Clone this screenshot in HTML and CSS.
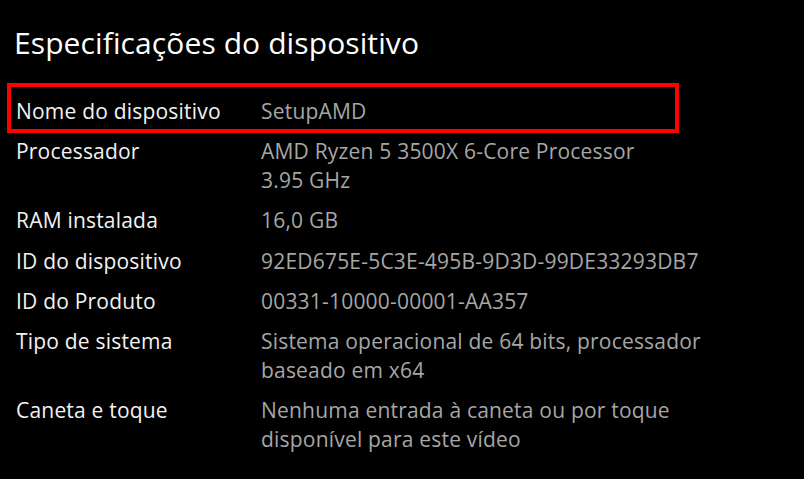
FILE: index.html
```html
<!DOCTYPE html>
<html lang="pt-BR">
<head>
<meta charset="utf-8">
<title>Especificações do dispositivo</title>
<link rel="stylesheet" href="styles.css">
</head>
<body>
<main class="panel">
  <h1 class="title">Especificações do dispositivo</h1>
  <dl class="specs">
    <div class="row highlighted">
      <dt class="label">Nome do dispositivo</dt>
      <dd class="value">SetupAMD</dd>
    </div>
    <div class="row">
      <dt class="label">Processador</dt>
      <dd class="value">AMD Ryzen 5 3500X 6-Core Processor<br>3.95 GHz</dd>
    </div>
    <div class="row">
      <dt class="label">RAM instalada</dt>
      <dd class="value">16,0 GB</dd>
    </div>
    <div class="row">
      <dt class="label">ID do dispositivo</dt>
      <dd class="value">92ED675E-5C3E-495B-9D3D-99DE33293DB7</dd>
    </div>
    <div class="row">
      <dt class="label">ID do Produto</dt>
      <dd class="value">00331-10000-00001-AA357</dd>
    </div>
    <div class="row">
      <dt class="label">Tipo de sistema</dt>
      <dd class="value">Sistema operacional de 64 bits, processador<br>baseado em x64</dd>
    </div>
    <div class="row">
      <dt class="label">Caneta e toque</dt>
      <dd class="value">Nenhuma entrada à caneta ou por toque<br>disponível para este vídeo</dd>
    </div>
  </dl>
</main>
</body>
</html>
```

FILE: styles.css
```css
html, body {
  margin: 0;
  padding: 0;
  background: #000;
}

.panel {
  font-family: "Open Sans", "Noto Sans", sans-serif;
  color: #fff;
  padding: 0 0 0 16px;
}

.title {
  margin: 0 0 0 -2px;
  padding-top: 23px;
  font-size: 30px;
  font-weight: 400;
  line-height: 40px;
  letter-spacing: 0.1px;
  color: #fff;
}

.specs {
  margin: 0;
  padding-top: 34px;
}

.row {
  display: grid;
  grid-template-columns: 245px 1fr;
  font-size: 21px;
  line-height: 29px;
  letter-spacing: 0.2px;
  margin-bottom: 11.2px;
}

.label {
  margin: 0;
  color: #f2f2f2;
}

.value {
  margin: 0;
  color: #a6a6a6;
}

.highlighted {
  position: relative;
}

.highlighted::after {
  content: "";
  position: absolute;
  left: -9px;
  top: -14px;
  width: 664px;
  height: 42px;
  border: 4px solid #f00;
}
```
